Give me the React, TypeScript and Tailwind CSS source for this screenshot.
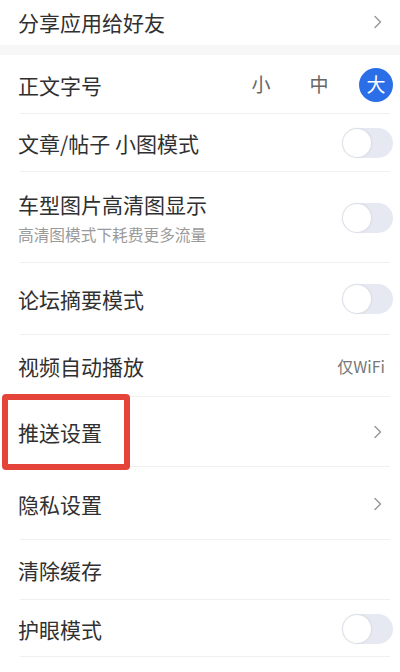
import type { ReactNode } from "react";

const font = { fontFamily: '"Noto Sans CJK SC", "Noto Sans", sans-serif' };

function Chevron() {
  return (
    <svg width="9" height="14" viewBox="0 0 9 14" fill="none" className="shrink-0" aria-hidden="true">
      <path d="M2 1.5l5.5 5.5L2 12.5" stroke="#9a9a9a" strokeWidth="1.5" strokeLinecap="round" strokeLinejoin="round" />
    </svg>
  );
}

function Toggle() {
  return (
    <span className="relative flex h-[30px] w-[51px] shrink-0 items-center rounded-full bg-[#e7e9f2]">
      <span className="ml-px size-[28px] rounded-full bg-white shadow-[0_0_3px_rgba(0,0,0,0.12)]" />
    </span>
  );
}

function Row({
  h,
  label,
  sub,
  right,
  line = true,
  children,
}: {
  h: string;
  label: string;
  sub?: string;
  right?: ReactNode;
  line?: boolean;
  children?: ReactNode;
}) {
  return (
    <div className={"relative flex items-center justify-between pl-[18px] pr-[7px] " + h}>
      <div className="flex flex-col">
        <span className="text-[21px] leading-[28px] text-[#303030]">{label}</span>
        {sub && <span className="mt-[7px] text-[15.7px] leading-[20px] text-[#9a9a9a]">{sub}</span>}
      </div>
      {right}
      {line && <div className="absolute bottom-0 left-[20px] right-[10px] h-px bg-[#f0f0f0]" />}
      {children}
    </div>
  );
}

export default function App() {
  return (
    <main className="h-[672px] w-[400px] overflow-hidden bg-white" style={font}>
      <Row
        h="h-[45px] pb-[2px]"
        label="分享应用给好友"
        line={false}
        right={
          <span className="mr-[11px]">
            <Chevron />
          </span>
        }
      />
      <div className="h-[10px] bg-[#f7f7f7]" />

      <Row
        h="h-[59px]"
        label="正文字号"
        right={
          <div className="flex items-center">
            <span className="w-[30px] text-center text-[19px] text-[#666]">小</span>
            <span className="ml-[28px] w-[30px] text-center text-[19px] text-[#666]">中</span>
            <span className="ml-[25px] flex size-[34px] items-center justify-center rounded-full bg-[#2a6fe8] text-[19px] text-white">
              大
            </span>
          </div>
        }
      />
      <Row h="h-[58px]" label="文章/帖子 小图模式" right={<Toggle />} />
      <Row
        h="h-[91px]"
        label="车型图片高清图显示"
        sub="高清图模式下耗费更多流量"
        right={<Toggle />}
      />
      <Row h="h-[72px]" label="论坛摘要模式" right={<Toggle />} />
      <Row
        h="h-[62px]"
        label="视频自动播放"
        right={<span className="mr-[8px] text-[16px] text-[#777]">仅WiFi</span>}
      />
      <Row
        h="h-[70px]"
        label="推送设置"
        right={
          <span className="mr-[11px]">
            <Chevron />
          </span>
        }
      >
        <div className="pointer-events-none absolute left-[2px] top-[-3px] h-[76px] w-[128px] rounded-[4px] border-[6px] border-[#e5443a]" />
      </Row>
      <Row
        h="h-[73px]"
        label="隐私设置"
        right={
          <span className="mr-[11px]">
            <Chevron />
          </span>
        }
      />
      <Row h="h-[60px]" label="清除缓存" />
      <Row h="h-[57px]" label="护眼模式" right={<Toggle />} />
    </main>
  );
}
